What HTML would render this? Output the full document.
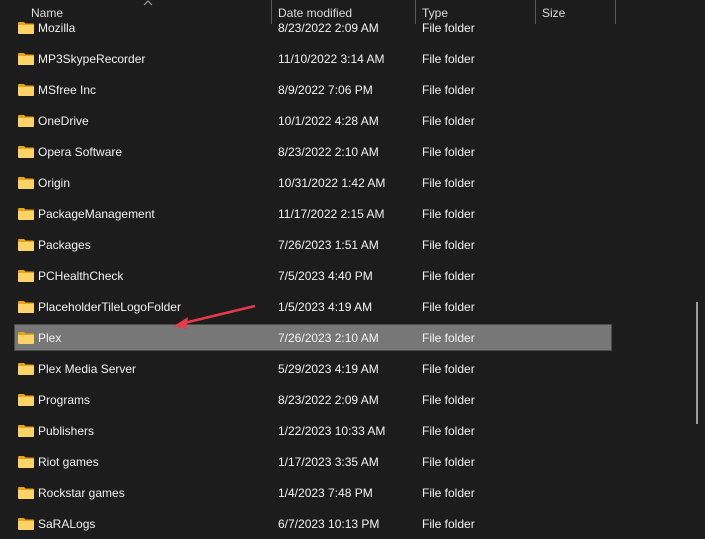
<html><head><style>
body{margin:0;width:705px;height:539px;background:#1c1c1c;overflow:hidden;font-family:"Liberation Sans",sans-serif;font-size:12px;color:#f2f2f2;position:relative}
.h{position:absolute;top:6px;color:#dcdcdc}
.sep{position:absolute;top:0;width:1px;height:24px;background:#5a5a5a}
.r{position:absolute;left:0;width:640px;height:20px}
.r span{position:absolute;top:3px}
.f{position:absolute;left:18px;top:4px;width:16px;height:12px}
.sel{position:absolute;left:14px;top:324px;width:596px;height:25px;background:#777;border:1px solid #4a4a4a}
.hdr{position:absolute;left:0;top:0;width:705px;height:20px;background:#1c1c1c}
</style></head><body>
<div class="sel"></div>
<div id="rows"></div>
<div class="hdr"></div>
<div class="h" style="left:31px">Name</div>
<svg style="position:absolute;left:143px;top:0" width="10" height="6"><path d="M1 5L5 1L9 5" stroke="#aaa" fill="none"/></svg>
<div class="sep" style="left:271px"></div><div class="h" style="left:278px">Date modified</div>
<div class="sep" style="left:415px"></div><div class="h" style="left:422px">Type</div>
<div class="sep" style="left:535px"></div><div class="h" style="left:542px">Size</div>
<div class="sep" style="left:615px"></div>
<div style="position:absolute;left:696px;top:302px;width:2px;height:122px;background:#9a9a9a"></div>
<svg style="position:absolute;left:0;top:0" width="705" height="539"><path d="M255 306L180 324" stroke="#e63a4a" stroke-width="2.5"/><path d="M174 326L188 317L186 329Z" fill="#e63a4a"/></svg>
<script>
var d=[["Mozilla","8/23/2022 2:09 AM"],["MP3SkypeRecorder","11/10/2022 3:14 AM"],["MSfree Inc","8/9/2022 7:06 PM"],["OneDrive","10/1/2022 4:28 AM"],["Opera Software","8/23/2022 2:10 AM"],["Origin","10/31/2022 1:42 AM"],["PackageManagement","11/17/2022 2:15 AM"],["Packages","7/26/2023 1:51 AM"],["PCHealthCheck","7/5/2023 4:40 PM"],["PlaceholderTileLogoFolder","1/5/2023 4:19 AM"],["Plex","7/26/2023 2:10 AM"],["Plex Media Server","5/29/2023 4:19 AM"],["Programs","8/23/2022 2:09 AM"],["Publishers","1/22/2023 10:33 AM"],["Riot games","1/17/2023 3:35 AM"],["Rockstar games","1/4/2023 7:48 PM"],["SaRALogs","6/7/2023 10:13 PM"]];
var h="";d.forEach(function(x,i){var y=18+i*31;
h+='<div class="r" style="top:'+y+'px"><svg class="f" viewBox="0 0 16 12"><path d="M0 1Q0 0 1 0H6L7.5 1.5H15Q16 1.5 16 2.5V3H0Z" fill="#e8a317"/><path d="M0 3H16V11Q16 12 15 12H1Q0 12 0 11Z" fill="#fcd367"/></svg><span style="left:38px">'+x[0]+'</span><span style="left:278px">'+x[1]+'</span><span style="left:422px">File folder</span></div>';});
document.getElementById("rows").innerHTML=h;
</script>
</body></html>
